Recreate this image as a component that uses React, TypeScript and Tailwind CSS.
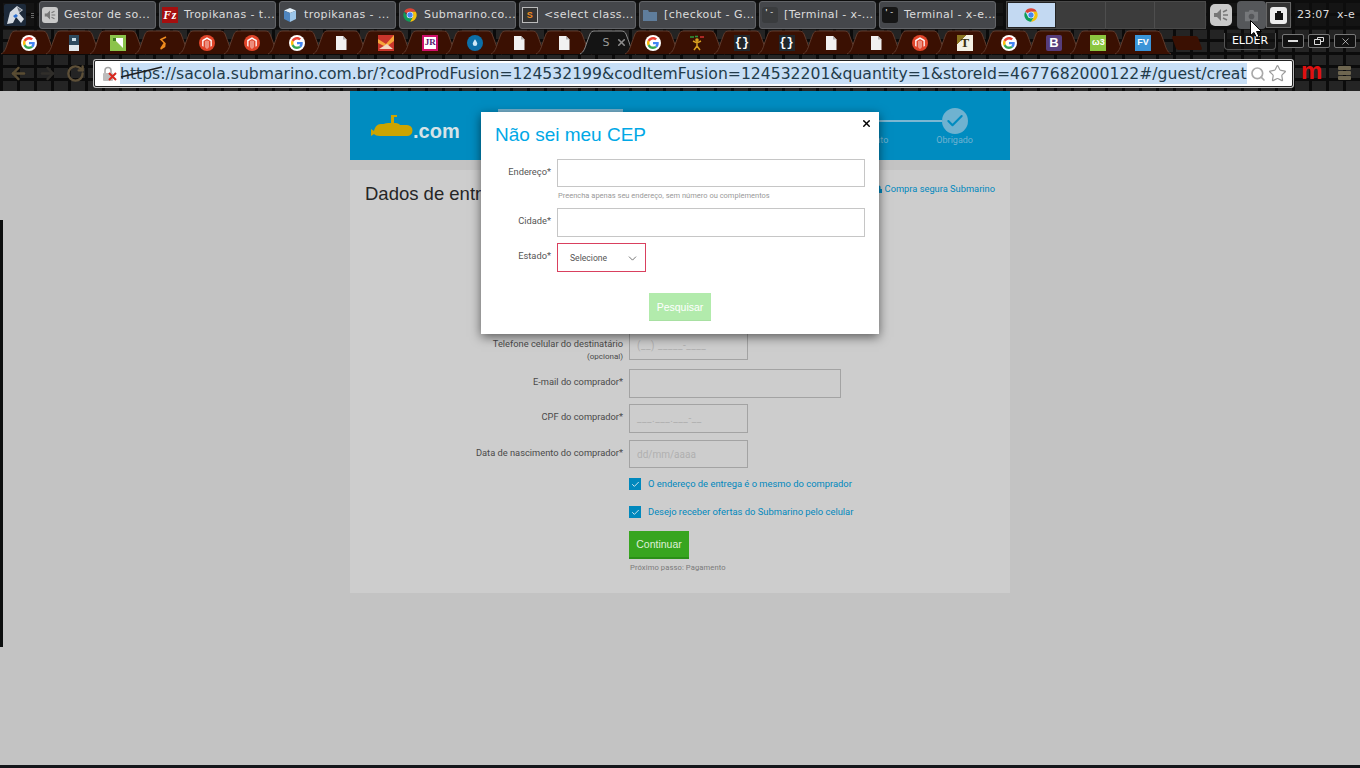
import { ArrowLeft, ArrowRight, Check, ChevronDown, RotateCw, Search, Star, X } from "lucide-react";
import type { ReactNode } from "react";

const URL_TEXT =
  "https://sacola.submarino.com.br/?codProdFusion=124532199&codItemFusion=124532201&quantity=1&storeId=4677682000122#/guest/creat";

function GoogleIcon() {
  return (
    <span className="flex h-4 w-4 items-center justify-center rounded-full bg-white">
      <svg viewBox="0 0 48 48" className="h-3 w-3">
        <path fill="#EA4335" d="M24 9.5c3.54 0 6.71 1.22 9.21 3.6l6.85-6.85C35.9 2.38 30.47 0 24 0 14.62 0 6.51 5.38 2.56 13.22l7.98 6.19C12.43 13.72 17.74 9.5 24 9.5z" />
        <path fill="#4285F4" d="M46.98 24.55c0-1.57-.15-3.09-.38-4.55H24v9.02h12.94c-.58 2.96-2.26 5.48-4.78 7.18l7.73 6c4.51-4.18 7.09-10.36 7.09-17.65z" />
        <path fill="#FBBC05" d="M10.53 28.59c-.48-1.45-.76-2.99-.76-4.59s.27-3.14.76-4.59l-7.98-6.19C.92 16.46 0 20.12 0 24c0 3.88.92 7.54 2.56 10.78l7.97-6.19z" />
        <path fill="#34A853" d="M24 48c6.48 0 11.93-2.13 15.89-5.81l-7.73-6c-2.15 1.45-4.92 2.3-8.16 2.3-6.26 0-11.57-4.22-13.47-9.91l-7.98 6.19C6.51 42.62 14.62 48 24 48z" />
      </svg>
    </span>
  );
}

function ChromeIcon() {
  return (
    <svg viewBox="0 0 24 24" className="h-4 w-4">
      <path fill="#db4437" d="M12 2a10 10 0 0 1 8.66 5H12a5 5 0 0 0-4.33 2.5L3.34 7A10 10 0 0 1 12 2z" />
      <path fill="#f4c20d" d="M20.66 7a10 10 0 0 1-8.66 15l4.33-7.5a5 5 0 0 0 0-5 5 5 0 0 0-4.33-2.5z" />
      <path fill="#0f9d58" d="M3.34 7l4.33 7.5A5 5 0 0 0 12 17a5 5 0 0 0 4.33-2.5L12 22A10 10 0 0 1 3.34 7z" />
      <circle cx="12" cy="12" r="5" fill="#fff" />
      <circle cx="12" cy="12" r="4" fill="#4285f4" />
    </svg>
  );
}

function DocIcon() {
  return (
    <svg viewBox="0 0 16 16" className="h-4 w-4">
      <path fill="#f1f1f1" d="M3 1h7l3.5 3.5V15H3z" />
      <path fill="#b5b5b5" d="M10 1v3.5h3.5z" />
    </svg>
  );
}

function MagentoIcon() {
  return (
    <span className="flex h-4 w-4 items-center justify-center rounded-full bg-[#e0452a]">
      <svg viewBox="0 0 16 16" className="h-[14px] w-[14px]">
        <path fill="#fff" d="M8 1.5 13.5 4.700v6.6L12 12.200V5.600L8 3.300 4 5.600v6.600l-1.500-.9V4.700z" />
        <path fill="#fff" d="M7.300 5.200v8.300L8 14l.7-.5V5.200l.9.5v7.300L8 14.500 6.400 13V5.700z" />
      </svg>
    </span>
  );
}

function BracesIcon() {
  return (
    <span className="flex h-4 w-4 items-center justify-center bg-[#20262b] font-['Liberation_Mono',monospace] text-[12px] leading-none font-bold text-white">
      {"{}"}
    </span>
  );
}

function TextTile({ className, children }: { className: string; children: ReactNode }) {
  return <span className={`flex h-4 w-4 items-center justify-center ${className}`}>{children}</span>;
}

const tabIcons: ReactNode[] = [
  <GoogleIcon />,
  <svg viewBox="0 0 16 16" className="h-4 w-4">
    <rect x="3" y="0" width="10" height="16" fill="#dfe6ea" />
    <rect x="3" y="0" width="10" height="10" fill="#2e4a5e" />
    <rect x="6" y="3" width="4" height="3" fill="#cfe0ea" />
  </svg>,
  <svg viewBox="0 0 16 16" className="h-4 w-4">
    <rect width="16" height="16" fill="#8bc34a" />
    <path d="M3 3h10v10z" fill="#fff" />
    <rect x="3" y="3" width="3" height="3" fill="#3f7d20" />
  </svg>,
  <svg viewBox="0 0 16 16" className="h-4 w-4">
    <path d="M11 2 6 4.500 9.500 8 6 13.500M10 8l-.5 3.500-4 2.500" fill="none" stroke="#f08c1e" strokeWidth="1.6" />
  </svg>,
  <MagentoIcon />,
  <MagentoIcon />,
  <GoogleIcon />,
  <DocIcon />,
  <svg viewBox="0 0 16 16" className="h-4 w-4">
    <rect width="16" height="16" fill="#c9352b" />
    <path d="M0 4 8 9 16 0v6L8 12 0 8z" fill="#f6a53a" />
    <path d="M1 14 9 9l6 5z" fill="#f3d6c0" />
  </svg>,
  <TextTile className="border-2 border-[#d0106a] bg-white font-['Liberation_Serif',serif] text-[9px] leading-none font-bold text-[#5a1a70]">JR</TextTile>,
  <span className="flex h-4 w-4 items-center justify-center rounded-full bg-[#0c6fa8]">
    <svg viewBox="0 0 16 16" className="h-3 w-3">
      <path d="M8 3c2 3 3 4.500 3 6a3 3 0 0 1-6 0c0-1.500 1-3 3-6z" fill="#cfe9f7" />
    </svg>
  </span>,
  <DocIcon />,
  <DocIcon />,
  null,
  <GoogleIcon />,
  <svg viewBox="0 0 16 16" className="h-4 w-4">
    <circle cx="8" cy="5" r="1.8" fill="#d8a020" />
    <path d="M8 6v5M4 6l4 2 4-2M8 11l-3 4M8 11l3 4" stroke="#d8a020" strokeWidth="1.5" fill="none" />
    <path d="M1 2h4M6 1.500h3" stroke="#2c9a3c" strokeWidth="1.5" />
    <path d="M11 2h4" stroke="#d03030" strokeWidth="1.5" />
  </svg>,
  <BracesIcon />,
  <BracesIcon />,
  <DocIcon />,
  <DocIcon />,
  <MagentoIcon />,
  <TextTile className="bg-[linear-gradient(135deg,#8a7420_30%,#f4f0e4_30%)] font-['Liberation_Serif',serif] text-[13px] leading-none font-bold text-[#3a3010]">T</TextTile>,
  <GoogleIcon />,
  <TextTile className="rounded-[2px] bg-[#563d7c] font-['Liberation_Sans',sans-serif] text-[13px] leading-none font-bold text-white">B</TextTile>,
  <TextTile className="bg-[#8cc63f] font-['Liberation_Sans',sans-serif] text-[9px] leading-none font-bold text-white">ω3</TextTile>,
  <TextTile className="bg-[#3a94d8] font-['Liberation_Sans',sans-serif] text-[9px] leading-none font-bold text-white">FV</TextTile>,
];

const tasks: { label: string; icon: ReactNode }[] = [
  {
    label: "Gestor de so...",
    icon: (
      <span className="flex h-4 w-4 items-center justify-center rounded-[3px] bg-[#c9c9c9]">
        <SpeakerGlyph className="h-3 w-3" />
      </span>
    ),
  },
  {
    label: "Tropikanas - t...",
    icon: (
      <span className="flex h-4 w-4 items-center justify-center bg-[#a50f0f] font-['Liberation_Serif',serif] text-[12px] leading-none font-bold text-white italic">
        Fz
      </span>
    ),
  },
  {
    label: "tropikanas - ...",
    icon: (
      <svg viewBox="0 0 16 16" className="h-4 w-4">
        <path d="M8 1 14 3.500 8 6 2 3.500z" fill="#e3f0fa" />
        <path d="M2 3.500 8 6v9L2 12z" fill="#4f86c0" />
        <path d="M14 3.500 8 6v9l6-3z" fill="#9cc5e8" />
      </svg>
    ),
  },
  { label: "Submarino.co...", icon: <ChromeIcon /> },
  {
    label: "<select class...",
    icon: (
      <span className="flex h-4 w-4 items-center justify-center border border-[#bbb] bg-[#333] font-['Liberation_Sans',sans-serif] text-[9px] leading-none font-bold text-[#f08c1e]">
        S
      </span>
    ),
  },
  {
    label: "[checkout - G...",
    icon: (
      <svg viewBox="0 0 16 16" className="h-4 w-4">
        <path d="M1 3h5l1 2h8v9H1z" fill="#5f7d9c" />
      </svg>
    ),
  },
  { label: "[Terminal - x-...", icon: <TermIcon dim /> },
  { label: "Terminal - x-e...", icon: <TermIcon /> },
];

function TermIcon({ dim }: { dim?: boolean }) {
  return (
    <span className={`flex h-4 w-4 items-start rounded-[3px] pl-[2px] font-['Liberation_Mono',monospace] text-[8px] leading-[10px] text-white ${dim ? "bg-[#3a3c3e]" : "bg-[#161616]"}`}>
      '-
    </span>
  );
}

function SpeakerGlyph({ className }: { className: string }) {
  return (
    <svg viewBox="0 0 16 16" className={className}>
      <path d="M1 6h3l4-4v12l-4-4H1z" fill="#777" />
      <path d="M10 8h5M10 5l4-2M10 11l4 2" stroke="#777" strokeWidth="1.4" />
    </svg>
  );
}

function ChromeTab({ active, children }: { active?: boolean; children: ReactNode }) {
  return (
    <div className="relative flex h-[25px] w-[44.56px] shrink-0 items-center justify-center">
      <svg viewBox="0 0 58 25" className="absolute top-0 left-[-7px] h-[25px] w-[58px]">
        <path
          d="M1 24C5 22 6 18 8 12L11 4C12 2 13 1 16 1H42C45 1 46 2 47 4L50 12C52 18 53 22 57 24"
          fill={active ? "#141414" : "#3a1002"}
          stroke={active ? "#8a8a8a" : "#5e3a2c"}
          strokeWidth="1"
        />
      </svg>
      <div className="relative">{children}</div>
    </div>
  );
}

function FormRow({
  label,
  labelClass = "pt-[7px]",
  className,
  children,
}: {
  label: ReactNode;
  labelClass?: string;
  className: string;
  children: ReactNode;
}) {
  return (
    <div className={`flex gap-[6px] ${className}`}>
      <div className={`w-[273px] text-right text-[9.3px] leading-[12px] text-[#4a4a4a] ${labelClass}`}>{label}</div>
      {children}
    </div>
  );
}

function CheckRow({ label, className }: { label: string; className: string }) {
  return (
    <div className={`flex items-center gap-[7px] pl-[279px] ${className}`}>
      <span className="flex h-3 w-3 items-center justify-center bg-[#0088bd]">
        <Check size={9} strokeWidth={2.5} className="text-[#d5e8f0]" />
      </span>
      <span className="text-[9.4px] leading-[12px] text-[#0088bd]">{label}</span>
    </div>
  );
}

function ModalRow({ label, className, children }: { label: string; className?: string; children: ReactNode }) {
  return (
    <div className={`flex gap-[6px] ${className ?? ""}`}>
      <div className="w-[70px] pt-[7px] text-right text-[9.3px] leading-[12px] text-[#555]">{label}*</div>
      {children}
    </div>
  );
}

export default function App() {
  return (
    <div className="relative flex h-[768px] w-[1360px] flex-col overflow-hidden bg-[#c3c3c3] font-['Roboto',sans-serif]">
      {/* desktop panel and browser chrome */}
      <div className="h-[91px] shrink-0 bg-[#242424] bg-[linear-gradient(90deg,#0b0b0b_3px,transparent_3px),linear-gradient(#0b0b0b_3px,transparent_3px)] bg-[size:17px_13px]">
        <div className="flex h-[30px] items-start bg-[#0e0e0e]/70 font-['DejaVu_Sans',sans-serif]">
          <svg viewBox="0 0 22 22" className="mt-1 ml-1 h-[22px] w-[22px] shrink-0">
            <rect width="22" height="22" rx="2" fill="#1d2a3a" />
            <path d="M3 20 6 8l7-6 6 4-4 3 5 6-3 4-5-6-3 6z" fill="#d5dbe2" />
            <path d="M9 12l3-2 2 2-3 2z" fill="#2a6fd0" />
            <path d="M13 3l5 3-3 2z" fill="#6d7580" />
          </svg>
          <div className="mt-[13px] ml-[5px] flex w-[3px] shrink-0 flex-col gap-[1px]">
            <span className="h-px bg-[#666]" />
            <span className="h-px bg-[#666]" />
            <span className="h-px bg-[#666]" />
          </div>
          <div className="mt-px ml-[5px] flex gap-[3px]">
            {tasks.map((t) => (
              <div
                key={t.label}
                className="flex h-[28px] w-[117px] items-center gap-[6px] rounded-[3px] border border-[#626468] bg-[#45474b] pl-[2px] text-[11px] tracking-[0.4px] whitespace-nowrap text-[#dcdcdc]"
              >
                <span className="flex w-4 shrink-0 justify-center">{t.icon}</span>
                <span>{t.label}</span>
              </div>
            ))}
          </div>
          <div className="mt-px ml-[10px] flex h-[28px] w-[200px] shrink-0 border border-[#4a4a4a] bg-[#3c3c3c]">
            <div className="flex w-[49px] items-center justify-center border border-[#222] bg-[#c3d9f2]">
              <ChromeIcon />
            </div>
            <div className="w-[50px] border-r border-[#4e4e4e]" />
            <div className="w-[50px] border-r border-[#4e4e4e]" />
            <div className="w-[50px]" />
          </div>
          <div className="mt-1 ml-1 flex h-[22px] w-[22px] shrink-0 items-center justify-center rounded-[5px] bg-[#c9c9c9]">
            <SpeakerGlyph className="h-4 w-4" />
          </div>
          <div className="mt-px ml-[5px] flex h-[28px] w-[29px] shrink-0 items-center justify-center rounded-[4px] bg-[#55575a]">
            <svg viewBox="0 0 16 16" className="h-[15px] w-[15px]">
              <path d="M1 4h4l1-2h4l1 2h4v10H1z" fill="#75777a" />
              <circle cx="8" cy="9" r="3" fill="#55575a" />
            </svg>
          </div>
          <div className="mt-0.5 flex h-[26px] w-[25px] shrink-0 items-center justify-center border border-[#666] bg-[#333]">
            <span className="flex h-[17px] w-[17px] items-center justify-center rounded-[3px] bg-[#ececec]">
              <svg viewBox="0 0 12 12" className="h-3 w-3">
                <path d="M2 11V4h2V2h4v2h2v7z" fill="#111" />
              </svg>
            </span>
          </div>
          <span className="mt-2 ml-[6px] w-[40px] shrink-0 text-[11px] leading-[13px] tracking-[0.2px] text-[#dddddd]">23:07</span>
          <span className="mt-2 shrink-0 text-[11px] leading-[13px] tracking-[0.2px] text-[#dddddd]">x-e</span>
        </div>

        <div className="flex h-[25px] pl-[7px]">
          {tabIcons.map((icon, i) =>
            i === 13 ? (
              <ChromeTab key={i} active>
                <div className="flex w-[38px] items-center justify-between pl-[13px] font-['DejaVu_Sans',sans-serif] text-[11px] leading-none text-[#9a9a9a]">
                  <span>S</span>
                  <X size={11} strokeWidth={3.5} className="text-[#8c8c8c]" />
                </div>
              </ChromeTab>
            ) : (
              <ChromeTab key={i}>{icon}</ChromeTab>
            ),
          )}
          <div className="mt-[6px] ml-[9px] h-[14px] w-[26px] shrink-0 skew-x-[20deg] rounded-[2px] bg-[#3a1002]" />
        </div>

        <div className="flex h-[36px] items-start">
          <div className="mt-[9px] flex w-[94px] shrink-0 items-center pl-[9px] text-[#5a4c32]">
            <ArrowLeft size={19} strokeWidth={3} />
            <ArrowRight size={19} strokeWidth={3} className="ml-[10px] text-[#302e2a]" />
            <RotateCw size={19} strokeWidth={3} className="ml-[9px] text-[#5e5038]" />
          </div>
          <div className="relative mt-[5px] flex h-[27px] w-[1199px] shrink-0 items-center rounded-[2px] border border-[#222] bg-white shadow-[0_0_0_1px_#bbb]">
            <div className="relative ml-[7px] h-4 w-4 shrink-0">
              <svg viewBox="0 0 16 16" className="h-4 w-4">
                <rect x="1" y="7" width="10" height="8" rx="1" fill="#bdbdbd" />
                <path d="M3 7V4.500a3 3 0 0 1 6 0V7" fill="none" stroke="#a5a5a5" strokeWidth="1.5" />
                <path d="M7 7l7 7M14 7l-7 7" stroke="#d8281e" strokeWidth="2" />
              </svg>
            </div>
            <div className="ml-[2px] h-[21px] w-[1127px] shrink-0 bg-[#c8dff6] font-['DejaVu_Sans',sans-serif] text-[15.64px] leading-[21px] whitespace-nowrap text-[#223b4a]">
              {URL_TEXT}
            </div>
            <Search size={16} strokeWidth={2.5} className="ml-[3px] shrink-0 text-[#a9a9a9]" />
            <Star size={19} strokeWidth={1.5} className="ml-[2px] shrink-0 text-[#9a9a9a]" />
            {/* crossed-out scheme of a broken certificate */}
            <svg viewBox="0 0 44 12" className="absolute top-[5px] left-[25px] h-3 w-11">
              <path d="M1 11 42 1" stroke="#1c1c1c" strokeWidth="1.5" />
            </svg>
          </div>
          <span className="mt-[1px] ml-[8px] w-[24px] shrink-0 font-['Liberation_Sans',sans-serif] text-[24px] leading-[30px] font-bold text-[#e01010]">m</span>
          <div className="mt-[11px] ml-[13px] flex w-[13px] shrink-0 flex-col gap-[1px]">
            <span className="h-[4px] rounded-[1px] bg-[#6e6650]" />
            <span className="h-[4px] rounded-[1px] bg-[#6e6650]" />
            <span className="h-[4px] rounded-[1px] bg-[#6e6650]" />
          </div>
        </div>
      </div>

      {/* checkout page, dimmed behind the modal */}
      <div className="mx-auto flex w-[660px] flex-col">
        <header className="flex h-[69px] items-start bg-[#008cc0]">
          <div className="mt-[23px] ml-[21px] flex w-[91px] shrink-0 items-end">
            <svg viewBox="0 0 42 24" className="h-6 w-[42px] shrink-0">
              <path d="M20 9V1h6v2h-3v6c3 0 5 .5 6 2h7a5.500 5.500 0 0 1 0 11H9c-3 0-5-1-6-2l-3 2v-7l3 2c1-4 3-7 7-7h3c1-1 3-1 7-1z" fill="#cca400" />
            </svg>
            <span className="font-['Liberation_Sans',sans-serif] text-[20px] leading-[14px] font-bold text-[#d5e3e8]">.com</span>
          </div>
          <div className="mt-[18px] ml-[36px] h-[3px] w-[125px] shrink-0 bg-[#74b0cc]" />
          <div className="mt-[17px] ml-auto flex w-[200px] shrink-0 flex-col items-end pr-[37px]">
            <div className="mr-[5px] flex items-center">
              <div className="h-[2px] w-[70px] bg-[#7cb7d2]" />
              <div className="flex h-[26px] w-[26px] items-center justify-center rounded-full bg-[#6fb2d0]">
                <Check size={20} strokeWidth={2.5} className="text-[#008cc0]" />
              </div>
            </div>
            <div className="flex gap-[48px] text-[9px] leading-[12px] text-[#6fb2d0]">
              <span>Pagamento</span>
              <span>Obrigado</span>
            </div>
          </div>
        </header>

        <section className="mt-[10px] h-[423px] bg-[#cdcdcd]">
          <div className="flex h-[44px] items-start justify-between px-[15px]">
            <h2 className="mt-[13px] font-['Liberation_Sans',sans-serif] text-[18.5px] leading-[21px] text-[#262626]">Dados de entrega</h2>
            <div className="mt-[13px] flex items-center gap-[2px] text-[9.3px] leading-[12px] text-[#0088bd]">
              <svg viewBox="0 0 8 8" className="h-2 w-2">
                <path d="M1 4h6v4H1zM2.500 4V2a1.500 1.500 0 0 1 3 0v2" fill="#0088bd" />
              </svg>
              <span>Compra segura Submarino</span>
            </div>
          </div>

          <div className="pt-[117px]">
            <FormRow
              className="h-[29px]"
              label={
                <>
                  Telefone celular do destinatário
                  <br />
                  <span className="text-[8px]">(opcional)</span>
                </>
              }
            >
              <div className="flex h-[29px] w-[119px] items-center border border-[#a3a3a3] pl-[7px] text-[10px] tracking-[0.5px] text-[#b0b0b0]">(__) _____-____</div>
            </FormRow>
            <FormRow className="mt-[9px]" label="E-mail do comprador*">
              <div className="h-[29px] w-[212px] border border-[#a3a3a3]" />
            </FormRow>
            <FormRow className="mt-[6px]" label="CPF do comprador*">
              <div className="flex h-[29px] w-[119px] items-center border border-[#a3a3a3] pl-[7px] text-[10px] tracking-[0.5px] text-[#b0b0b0]">___.___.___-__</div>
            </FormRow>
            <FormRow className="mt-[7px]" label="Data de nascimento do comprador*" labelClass="pt-[7px]">
              <div className="flex h-[28px] w-[119px] items-center border border-[#a3a3a3] pl-[7px] text-[10px] text-[#b0b0b0]">dd/mm/aaaa</div>
            </FormRow>
            <CheckRow className="mt-[10px]" label="O endereço de entrega é o mesmo do comprador" />
            <CheckRow className="mt-[16px]" label="Desejo receber ofertas do Submarino pelo celular" />
            <div className="mt-[13px] ml-[279px] flex h-[28px] w-[60px] items-center justify-center border-b-2 border-[#2a8f18] bg-[#37a51f] pt-[1px] font-['Liberation_Sans',sans-serif] text-[10.5px] text-[#dff0d8]">
              Continuar
            </div>
            <p className="mt-[3px] ml-[280px] text-[7.6px] leading-[12px] tracking-[0.1px] text-[#7a7a7a]">Próximo passo: Pagamento</p>
          </div>
        </section>
      </div>

      {/* bottom edge of the window and sliver of a window at the left */}
      <div className="mt-auto h-[3px] shrink-0 bg-[#14161a]" />
      <div className="absolute top-[220px] left-0 h-[427px] w-[3px] bg-[#0c0e0e]" />

      {/* Não sei meu CEP modal */}
      <div className="absolute top-[112px] left-[481px] h-[222px] w-[398px] bg-white pt-[11px] shadow-[0_3px_10px_rgba(0,0,0,0.55)]">
        <button className="absolute top-[6px] right-[7px] text-black">
          <X size={11} strokeWidth={3} />
        </button>
        <h3 className="ml-[14px] font-['Liberation_Sans',sans-serif] text-[19px] leading-[24px] text-[#00a8e6]">Não sei meu CEP</h3>
        <ModalRow label="Endereço" className="mt-[12px]">
          <div className="h-[28px] w-[308px] border border-[#c6c6c6]" />
        </ModalRow>
        <p className="mt-[3px] ml-[77px] text-[7.5px] leading-[12px] text-[#999]">Preencha apenas seu endereço, sem número ou complementos</p>
        <ModalRow label="Cidade" className="mt-[6px]">
          <div className="h-[29px] w-[308px] border border-[#c6c6c6]" />
        </ModalRow>
        <ModalRow label="Estado" className="mt-[6px]">
          <div className="flex h-[29px] w-[89px] items-center justify-between border border-[#d9405e] pt-[2px] pr-[6px] pl-[12px] text-[8.6px] text-[#555]">
            <span>Selecione</span>
            <ChevronDown size={13} strokeWidth={1.5} />
          </div>
        </ModalRow>
        <div className="mt-[21px] ml-[168px] flex h-[28px] w-[62px] items-center justify-center border-b border-[#a8e0a2] bg-[#b2ebac] pt-[2px] font-['Liberation_Sans',sans-serif] text-[10.5px] text-white">
          Pesquisar
        </div>
      </div>

      {/* panel tooltip, window buttons and mouse pointer */}
      <div className="absolute top-[33px] left-[1224px] flex h-[17px] w-[52px] items-center justify-center rounded-b-[4px] border border-t-0 border-[#555] bg-[#111]/60 font-['DejaVu_Sans',sans-serif] text-[11px] text-white">
        ELDER
      </div>
      <div className="absolute top-[34px] left-[1282px] flex gap-[4px]">
        <div className="flex h-[14px] w-[22px] items-center justify-center rounded-[2px] border border-[#777] bg-[#111]">
          <span className="h-[2px] w-[10px] bg-[#ddd]" />
        </div>
        <div className="flex h-[14px] w-[22px] items-center justify-center rounded-[2px] border border-[#777] bg-[#111]">
          <svg viewBox="0 0 10 8" className="h-2 w-[10px]">
            <path d="M3.500 2.500V.5h6v4H7M.5 2.500h6v5h-6z" fill="none" stroke="#ddd" />
          </svg>
        </div>
        <div className="flex h-[14px] w-[22px] items-center justify-center rounded-[2px] border border-[#777] bg-[#111]">
          <X size={11} strokeWidth={1.5} className="text-[#ddd]" />
        </div>
      </div>
      <svg viewBox="0 0 13 18" className="absolute top-[20px] left-[1250px] h-[18px] w-[13px]">
        <path d="M.5.5v15l3.500-3 2.500 5 2.500-1-2.500-5h5z" fill="#fff" stroke="#000" strokeWidth="1" />
      </svg>
    </div>
  );
}
